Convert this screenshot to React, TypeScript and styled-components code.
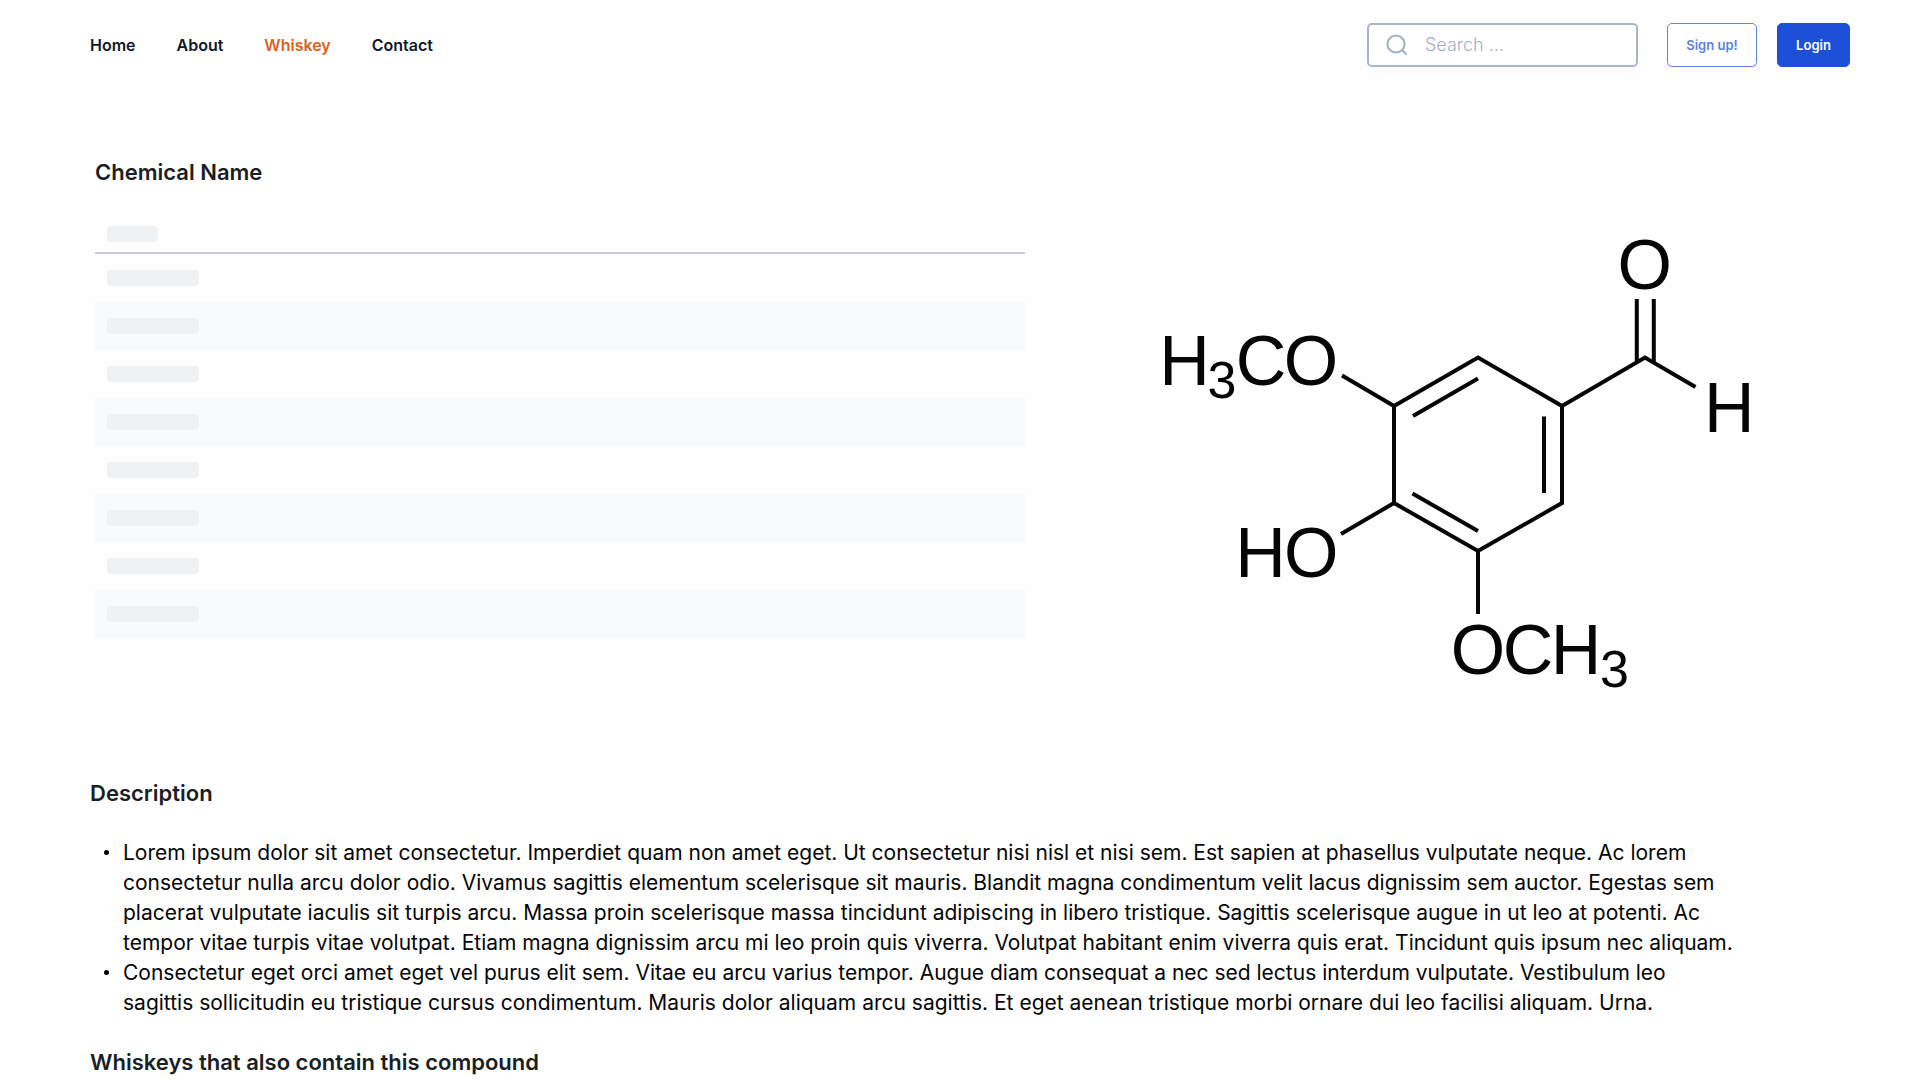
import React from "react";
import styled, { createGlobalStyle } from "styled-components";

const GlobalStyle = createGlobalStyle`
  *, *::before, *::after { box-sizing: border-box; }
  body {
    margin: 0;
    background: #fefefe;
    color: #0c0e12;
    font-family: Inter, "Liberation Sans", sans-serif;
  }
`;

const Header = styled.header`
  display: flex;
  align-items: center;
  justify-content: space-between;
  padding: 23px 70px 0 90px;
`;

const Nav = styled.nav`
  display: flex;
  gap: 41px;
`;

const NavLink = styled.a<{ $active?: boolean }>`
  color: ${(p) => (p.$active ? "#d9621e" : "#10182b")};
  font-size: 16px;
  font-weight: 600;
  line-height: 24px;
  text-decoration: none;
`;

const Actions = styled.div`
  display: flex;
  align-items: center;
  gap: 20px;
`;

const SearchBox = styled.label`
  display: flex;
  align-items: center;
  gap: 17px;
  width: 271px;
  height: 44px;
  margin-right: 9px;
  padding: 0 17px;
  border: 2px solid #a9b5c4;
  border-radius: 5px;
  background: #ffffff;
  box-shadow: 0 8px 12px rgba(0, 0, 0, 0.01);
  color: #a3b0bf;
`;

const SearchInput = styled.input`
  flex: 1;
  min-width: 0;
  padding: 0;
  border: 0;
  outline: 0;
  background: transparent;
  color: #10182b;
  font-family: inherit;
  font-size: 18px;
  font-weight: 300;
  line-height: 24px;

  &::placeholder {
    color: #a3b0bf;
    opacity: 1;
  }
`;

const Button = styled.button<{ $solid?: boolean }>`
  min-width: ${(p) => (p.$solid ? "73px" : "90px")};
  height: 44px;
  padding: 0 16px;
  border: 1px solid ${(p) => (p.$solid ? "#1d4fd8" : "#5f85e6")};
  border-radius: 5px;
  background: ${(p) => (p.$solid ? "#1d4fd8" : "#ffffff")};
  color: ${(p) => (p.$solid ? "#ffffff" : "#5a80e4")};
  font-family: inherit;
  font-size: 13px;
  font-weight: 600;
  line-height: 20px;
`;

const Main = styled.main`
  padding: 89px 90px 0;
`;

const Overview = styled.section`
  display: grid;
  grid-template-columns: minmax(0, 930fr) minmax(0, 805fr);
  padding-left: 5px;
`;

const Heading = styled.h2`
  margin: 0;
  color: #1a1e25;
  font-size: 22px;
  font-weight: 600;
  line-height: 32px;
`;

const Properties = styled.table`
  width: 100%;
  margin-top: 26px;
  border-collapse: separate;
  border-spacing: 0;
`;

const HeadCell = styled.th`
  height: 40px;
  padding: 0 12px 10px;
  border-bottom: 2px solid #c7ccd9;
  text-align: left;
  vertical-align: bottom;
`;

const Row = styled.tr`
  &:nth-child(even) {
    background: #f9fafc;
  }
`;

const Cell = styled.td`
  height: 48px;
  padding: 0 12px;
`;

const Placeholder = styled.span<{ $short?: boolean }>`
  display: block;
  width: ${(p) => (p.$short ? "51px" : "92px")};
  height: 16px;
  border-radius: 4px;
  background: #f0f1f3;
`;

const Structure = styled.figure`
  display: flex;
  justify-content: center;
  margin: 0;
  padding: 54px 0 0 65px;
`;

const Description = styled.section`
  margin-top: 77px;
`;

const Notes = styled.ul`
  margin: 29px 0 28px;
  padding-left: 33px;
  list-style: none;
  color: #050608;
  font-size: 21px;
  line-height: 30px;
`;

const Note = styled.li`
  &::before {
    content: "";
    display: inline-block;
    width: 5px;
    height: 5px;
    margin: 0 14px 0 -19px;
    border-radius: 50%;
    background: currentColor;
    vertical-align: 5px;
  }
`;

const atoms: Array<[string, number, number]> = [
  ["H", 24.5, 154.5],
  ["C", 101, 154.5],
  ["O", 151, 154.5],
  ["O", 484.7, 59],
  ["H", 569.3, 202.3],
  ["H", 100.5, 347],
  ["O", 151.3, 347],
  ["O", 318, 443.6],
  ["C", 368, 443.6],
  ["H", 416, 443.6],
];

const subscripts: Array<[string, number, number]> = [
  ["3", 62, 167.5],
  ["3", 454.5, 456.5],
];

function Molecule() {
  return (
    <svg width="600" height="490" viewBox="0 -20 600 490" role="img" aria-label="Syringaldehyde structure">
      <g fill="none" stroke="#050505" strokeWidth="4" strokeLinejoin="miter">
        <path d="M234 176 318 127.5 402 176V273L318 321 234 273Z" />
        <path d="M253 186 318 148.5M384 186.5V263M252.5 263.5 318 301" />
        <path d="M182 145.5 234 176M181 304 234 273M318 321V384" />
        <path d="M402 176 485 127.5 535.5 157M476.8 69V132M493.8 69V132" />
      </g>
      <g fill="#050505" fontFamily='"Liberation Sans", Arial, sans-serif' textAnchor="middle">
        {atoms.map(([name, x, y]) => (
          <text key={`${name}-${x}-${y}`} x={x} y={y} fontSize="70">
            {name}
          </text>
        ))}
        {subscripts.map(([name, x, y]) => (
          <text key={`${name}-${x}-${y}`} x={x} y={y} fontSize="52">
            {name}
          </text>
        ))}
      </g>
    </svg>
  );
}

function SearchIcon() {
  return (
    <svg width="22" height="22" viewBox="0 0 22 22" fill="none" stroke="currentColor" strokeWidth="2" strokeLinecap="round" aria-hidden="true">
      <circle cx="10" cy="10" r="8.6" />
      <path d="M16.2 16.2 20 20" />
    </svg>
  );
}

export default function App() {
  return (
    <>
      <GlobalStyle />
      <Header>
        <Nav aria-label="Main">
          <NavLink href="#home">Home</NavLink>
          <NavLink href="#about">About</NavLink>
          <NavLink href="#whiskey" $active aria-current="page">Whiskey</NavLink>
          <NavLink href="#contact">Contact</NavLink>
        </Nav>
        <Actions>
          <SearchBox>
            <SearchIcon />
            <SearchInput type="text" placeholder="Search ..." aria-label="Search" />
          </SearchBox>
          <Button type="button">Sign up!</Button>
          <Button type="button" $solid>Login</Button>
        </Actions>
      </Header>
      <Main>
        <Overview>
          <div>
            <Heading>Chemical Name</Heading>
            <Properties aria-busy="true">
              <thead>
                <tr>
                  <HeadCell scope="col"><Placeholder $short /></HeadCell>
                </tr>
              </thead>
              <tbody>
                {Array.from({ length: 8 }, (_, i) => (
                  <Row key={i}>
                    <Cell><Placeholder /></Cell>
                  </Row>
                ))}
              </tbody>
            </Properties>
          </div>
          <Structure>
            <Molecule />
          </Structure>
        </Overview>
        <Description>
          <Heading>Description</Heading>
          <Notes>
            <Note>
              Lorem ipsum dolor sit amet consectetur. Imperdiet quam non amet eget. Ut consectetur nisi nisl et nisi sem. Est sapien at phasellus vulputate neque. Ac lorem
              <br />
              consectetur nulla arcu dolor odio. Vivamus sagittis elementum scelerisque sit mauris. Blandit magna condimentum velit lacus dignissim sem auctor. Egestas sem
              <br />
              placerat vulputate iaculis sit turpis arcu. Massa proin scelerisque massa tincidunt adipiscing in libero tristique. Sagittis scelerisque augue in ut leo at potenti. Ac
              <br />
              tempor vitae turpis vitae volutpat. Etiam magna dignissim arcu mi leo proin quis viverra. Volutpat habitant enim viverra quis erat. Tincidunt quis ipsum nec aliquam.
            </Note>
            <Note>
              Consectetur eget orci amet eget vel purus elit sem. Vitae eu arcu varius tempor. Augue diam consequat a nec sed lectus interdum vulputate. Vestibulum leo
              <br />
              sagittis sollicitudin eu tristique cursus condimentum. Mauris dolor aliquam arcu sagittis. Et eget aenean tristique morbi ornare dui leo facilisi aliquam. Urna.
            </Note>
          </Notes>
          <Heading>Whiskeys that also contain this compound</Heading>
        </Description>
      </Main>
    </>
  );
}
